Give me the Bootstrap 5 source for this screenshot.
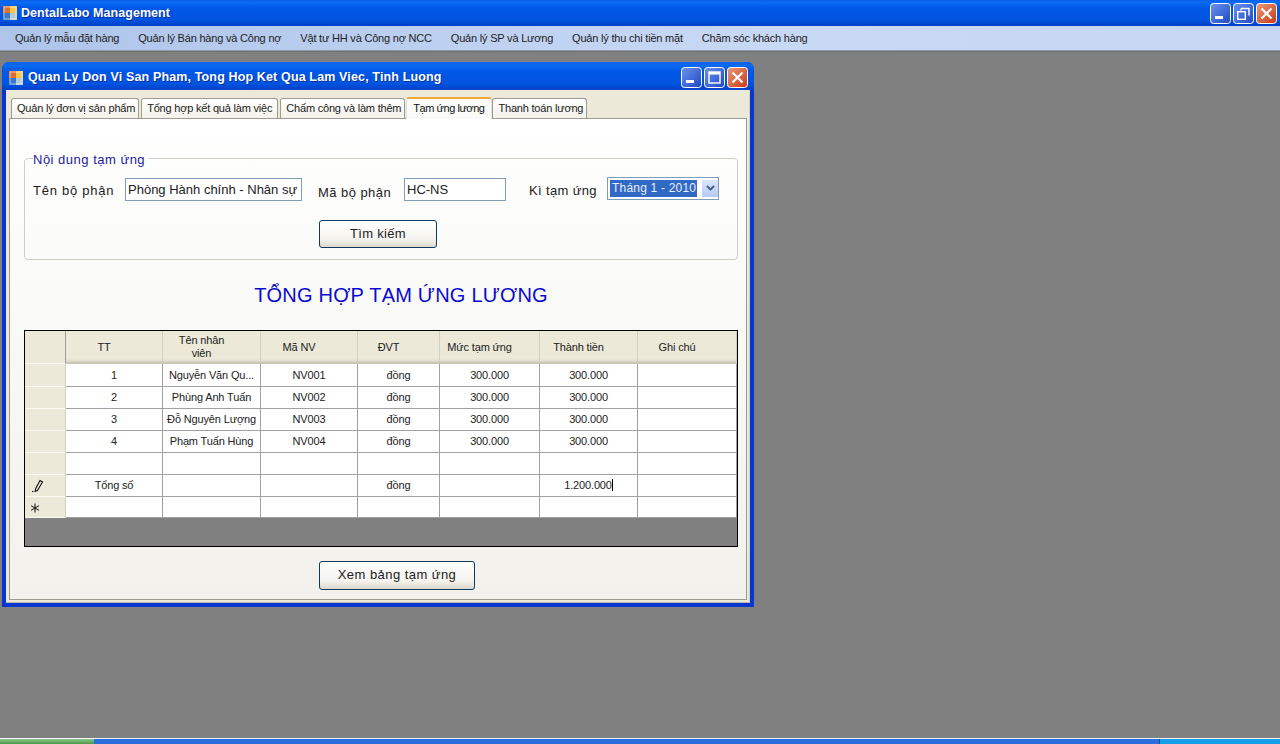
<!DOCTYPE html>
<html lang="vi">
<head>
<meta charset="utf-8">
<title>DentalLabo Management</title>
<link href="https://cdn.jsdelivr.net/npm/bootstrap@5.3.0/dist/css/bootstrap.min.css" rel="stylesheet">
<style>
html,body{margin:0;height:744px;overflow:hidden;background:#808080}
body{font-family:"Liberation Sans",sans-serif;font-size:11px;color:#111}
.app-shell{width:1280px;height:744px}
.flex-none{flex:none}
.xp-title{height:26px;flex:none;background:linear-gradient(#0a62ea 0,#0a6af2 10%,#0058e6 30%,#0054e0 75%,#0040c8 100%);padding:0 3px 0 3px}
.xp-title-text{color:#fff;font-weight:700;font-size:12.5px;text-shadow:1px 1px 0 #0a2f9a;letter-spacing:.05px}
.xp-btns{gap:2px}
.xp-btn{width:21px;height:21px;display:block;flex:none}
.menu-strip{height:25px;flex:none;background:linear-gradient(90deg,#aec4ea,#c8d9f5 60%,#c6d7f3);border-bottom:1px solid #8f9cb0;padding-left:15px;gap:19px;font-size:11px;letter-spacing:-.2px;color:#222}
.mdi-area{background:#808080;border-top:1px solid #6f7068;padding:10px 0 0 2px;min-height:0}
.child-win{width:752px;height:545px;background:#0a36d0;border-radius:7px 7px 0 0;padding:0 4px 4px;flex:none}
.child-title{height:28px;flex:none;margin:0 -4px;padding:3px 6px 0 7px;border-radius:7px 7px 0 0;background:linear-gradient(#0a62ea 0,#0a6af2 12%,#0058e6 32%,#0054e0 78%,#0040c8 100%)}
.child-title .xp-title-text{font-size:12.5px;letter-spacing:.14px;margin-left:1px}
.child-body{background:#ece9d8;min-height:0;padding:8px 2px 2px 3px;border-right:1px solid #cfd0c8;border-bottom:1px solid #b8b8b0}
.tab-strip.nav-tabs{border:0;padding-left:2px;height:20px;flex:none;flex-wrap:nowrap;gap:2px;--bs-nav-tabs-border-width:0}
.tab-strip .nav-link{font-size:11px;letter-spacing:-.2px;color:#222;padding:0 3px 0 5px;height:20px;margin-top:0;line-height:19px;border:1px solid #9c9c90;border-bottom:0;border-radius:3px 3px 0 0;background:linear-gradient(#fff,#f4f2e9);white-space:nowrap}
.tab-strip .nav-item:nth-child(2) .nav-link{padding-right:5px}
.tab-strip .nav-link.active{height:22px;margin:-1px -2px 0 -1px;line-height:19px;letter-spacing:-.45px;background:#fbfbf9;border-top:2px solid #f2a93a;color:#111;position:relative;z-index:2;padding:0 7px 0 6px}
.tab-page{border:1px solid #9c9c90;background:linear-gradient(#fff,#f9f9f6 40%,#f3f1ec);min-height:0;padding:27px 8px 0 14px}
.group-box{border:1px solid #cfcfc4;border-radius:4px;height:114px;padding:0 8px;margin:0;min-width:0;flex:none}
.group-legend{float:none;width:auto;margin:0;padding:4px 3px 0 0;font-size:13px;line-height:20px;color:#1c1c9e;letter-spacing:.5px}
.field-row{margin-top:8px}
.lbl{font-size:13px;color:#222;letter-spacing:.45px;white-space:nowrap;flex:none}
.label-name{width:92px;margin-top:3px;letter-spacing:.75px}
.label-code{width:86px;margin:5px 0 0 16px}
.label-term{width:78px;margin:3px 0 0 23px;letter-spacing:.35px}
.win-input.form-control{font-size:13px;height:23px;border-radius:0;border:1px solid #7f9db9;padding:0 2px;color:#222;background:#fff;box-shadow:none;flex:none}
.input-name{width:177px}
.input-code{width:102px}
.combo{width:112px;height:23px;margin-top:-1px;border:1px solid #7f9db9;background:#fff;padding:2px 1px 2px 2px;flex:none}
.combo-text{background:#316ac5;color:#e8eefc;font-size:12px;letter-spacing:.2px;line-height:16px;width:87px;padding-left:2px;white-space:nowrap;flex:none;align-self:flex-start;height:17px}
.combo-arrow{width:16px;background:linear-gradient(#dbe6fb,#b5c9f2);margin-left:5px;flex:none}
.win-btn.btn{font-size:13px;letter-spacing:.3px;color:#222;border:1px solid #0f3a5f;border-radius:3px;background:linear-gradient(#fff,#f4f3ee 70%,#dcd8cc);padding:0;line-height:1}
.btn-row{padding-left:286px;margin-top:17px}
.btn-search{width:118px;height:28px}
.report-head{font-size:20px;line-height:24px;color:#0a0ad2;letter-spacing:.22px;margin:23px 0;padding-left:40px}
.grid-box{border:1px solid #000;height:217px;background:#808080;width:714px;overflow:hidden;flex:none}
.data-grid.table{width:712px;table-layout:fixed;margin:0;--bs-table-bg:transparent;border-collapse:separate;border-spacing:0;font-size:11px;letter-spacing:-.15px;color:#222}
.data-grid col:nth-child(1){width:41px}
.data-grid col:nth-child(2){width:97px}
.data-grid col:nth-child(3){width:98px}
.data-grid col:nth-child(4){width:97px}
.data-grid col:nth-child(5){width:82px}
.data-grid col:nth-child(6){width:100px}
.data-grid col:nth-child(7){width:98px}
.data-grid col:nth-child(8){width:99px}
.data-grid th,.data-grid td{height:22px;padding:0 2px;border:0;border-right:1px solid #a0a0a0;border-bottom:1px solid #a0a0a0;background:#fff;text-align:center;vertical-align:middle;font-weight:400;line-height:13px;white-space:nowrap;overflow:hidden;box-shadow:none}
.data-grid thead th{height:33px;background:linear-gradient(#ece9d8 90%,#d8d5c4);border-right:1px solid #d2cfbe;border-bottom:2px solid #c9c6b6;padding:1px 22px 0 2px;white-space:normal}
.data-grid tbody tr:first-child td{height:23px;padding-top:1px}
.data-grid tbody tr:last-child td{height:21px}
.data-grid .corner,.data-grid .row-head{background:#ece9d8;border-right:1px solid #d2cfbe;border-bottom:1px solid #fbfaf4;padding:0 0 0 6px;text-align:left}
.data-grid thead .corner{padding:0;border-right:1px solid #a0a0a0}
.data-grid .star-head{padding-left:5px}
.caret-mark{border-right:1px solid #000}
.save-row{padding-left:295px;margin-top:14px}
.btn-view{width:156px;height:29px}
.win-btn.btn-view{letter-spacing:.45px;padding-bottom:2px}
.task-strip{height:6px;flex:none;background:#2a6ee0;border-top:1px solid #f4f6fb}
.task-start{width:94px;background:linear-gradient(#8cc68c,#4a9a4a)}
.task-tray{width:121px;background:#15a0ea;margin-left:auto;border-left:1px solid #0c4a9a}
</style>
</head>
<body>
<div class="app-shell d-flex flex-column">

  <div class="xp-title d-flex align-items-center">
    <svg width="14" height="14" viewBox="0 0 14 14" class="flex-none me-1"><rect x="0" y="0" width="7" height="7" fill="#e07030"/><rect x="7" y="0" width="7" height="7" fill="#f2c84a"/><rect x="0" y="7" width="7" height="7" fill="#3a78c8"/><rect x="7" y="7" width="7" height="7" fill="#b8c8d8"/><rect x="1" y="1" width="12" height="12" fill="none" stroke="#fff" stroke-opacity=".55"/></svg>
    <span class="xp-title-text">DentalLabo Management</span>
    <div class="xp-btns d-flex ms-auto">
      <svg class="xp-btn" viewBox="0 0 21 21"><defs><linearGradient id="bl" x1="0" y1="0" x2="1" y2="1"><stop offset="0" stop-color="#6c93ee"/><stop offset="1" stop-color="#1f48c4"/></linearGradient><linearGradient id="rd" x1="0" y1="0" x2="1" y2="1"><stop offset="0" stop-color="#ec9a78"/><stop offset="1" stop-color="#c83a14"/></linearGradient></defs><rect x=".5" y=".5" width="20" height="20" rx="3" fill="url(#bl)" stroke="#fff"/><rect x="5" y="13" width="8" height="3" fill="#fff"/></svg>
      <svg class="xp-btn" viewBox="0 0 21 21"><rect x=".5" y=".5" width="20" height="20" rx="3" fill="url(#bl)" stroke="#fff"/><path d="M8 5.5h8v7M8 5.5v2" fill="none" stroke="#fff" stroke-width="1.4"/><rect x="4.7" y="8.7" width="7.6" height="7.6" fill="none" stroke="#fff" stroke-width="1.4"/></svg>
      <svg class="xp-btn" viewBox="0 0 21 21"><rect x=".5" y=".5" width="20" height="20" rx="3" fill="url(#rd)" stroke="#fff"/><path d="M5.5 5.5l10 10M15.5 5.5l-10 10" stroke="#fff" stroke-width="2.2"/></svg>
    </div>
  </div>

  <nav class="menu-strip nav align-items-center flex-nowrap">
    <span>Quản lý mẫu đặt hàng</span>
    <span>Quản lý Bán hàng và Công nợ</span>
    <span>Vật tư HH và Công nợ NCC</span>
    <span>Quản lý SP và Lương</span>
    <span>Quản lý thu chi tiền mặt</span>
    <span>Chăm sóc khách hàng</span>
  </nav>

  <div class="mdi-area flex-grow-1 d-flex align-items-start">
    <div class="child-win d-flex flex-column">
      <div class="child-title d-flex align-items-center">
        <svg width="14" height="14" viewBox="0 0 14 14" class="me-1"><rect x="0" y="0" width="7" height="7" fill="#e07030"/><rect x="7" y="0" width="7" height="7" fill="#f2c84a"/><rect x="0" y="7" width="7" height="7" fill="#3a78c8"/><rect x="7" y="7" width="7" height="7" fill="#b8c8d8"/><rect x="1" y="1" width="12" height="12" fill="none" stroke="#fff" stroke-opacity=".55"/></svg>
        <span class="xp-title-text">Quan Ly Don Vi San Pham, Tong Hop Ket Qua Lam Viec, Tinh Luong</span>
        <div class="xp-btns d-flex ms-auto">
          <svg class="xp-btn" viewBox="0 0 21 21"><rect x=".5" y=".5" width="20" height="20" rx="3" fill="url(#bl)" stroke="#fff"/><rect x="5" y="13" width="8" height="3" fill="#fff"/></svg>
          <svg class="xp-btn" viewBox="0 0 21 21"><rect x=".5" y=".5" width="20" height="20" rx="3" fill="url(#bl)" stroke="#fff"/><rect x="5" y="5" width="11" height="11" fill="none" stroke="#fff" stroke-width="1.4"/><rect x="5" y="5" width="11" height="2.5" fill="#fff"/></svg>
          <svg class="xp-btn" viewBox="0 0 21 21"><rect x=".5" y=".5" width="20" height="20" rx="3" fill="url(#rd)" stroke="#fff"/><path d="M5.5 5.5l10 10M15.5 5.5l-10 10" stroke="#fff" stroke-width="2.2"/></svg>
        </div>
      </div>

      <div class="child-body flex-grow-1 d-flex flex-column">
        <ul class="tab-strip nav nav-tabs">
          <li class="nav-item"><span class="nav-link">Quản lý đơn vị sản phẩm</span></li>
          <li class="nav-item"><span class="nav-link">Tổng hợp kết quả làm việc</span></li>
          <li class="nav-item"><span class="nav-link">Chấm công và làm thêm</span></li>
          <li class="nav-item"><span class="nav-link active">Tạm ứng lương</span></li>
          <li class="nav-item"><span class="nav-link">Thanh toán lương</span></li>
        </ul>
        <div class="tab-page flex-grow-1 d-flex flex-column">
          <fieldset class="group-box">
            <legend class="group-legend">Nội dung tạm ứng</legend>
            <div class="d-flex align-items-start field-row">
              <span class="lbl label-name">Tên bộ phận</span>
              <input class="win-input form-control input-name" value="Phòng Hành chính - Nhân sự">
              <span class="lbl label-code">Mã bộ phận</span>
              <input class="win-input form-control input-code" value="HC-NS">
              <span class="lbl label-term">Kì tạm ứng</span>
              <div class="combo d-flex">
                <div class="combo-text">Tháng 1 - 2010</div>
                <div class="combo-arrow d-flex align-items-center justify-content-center"><svg width="9" height="7" viewBox="0 0 9 7"><path d="M1 1l3.5 3.5L8 1" fill="none" stroke="#4d6185" stroke-width="2"/></svg></div>
              </div>
            </div>
            <div class="d-flex btn-row"><button type="button" class="win-btn btn btn-search">Tìm kiếm</button></div>
          </fieldset>

          <div class="report-head text-center">TỔNG HỢP TẠM ỨNG LƯƠNG</div>

          <div class="grid-box">
            <table class="data-grid table">
              <colgroup><col><col><col><col><col><col><col><col></colgroup>
              <thead><tr><th class="corner"></th><th>TT</th><th>Tên nhân<br>viên</th><th>Mã NV</th><th>ĐVT</th><th>Mức tạm ứng</th><th>Thành tiền</th><th>Ghi chú</th></tr></thead>
              <tbody>
                <tr><td class="row-head"></td><td>1</td><td>Nguyễn Văn Qu...</td><td>NV001</td><td>đồng</td><td>300.000</td><td>300.000</td><td></td></tr>
                <tr><td class="row-head"></td><td>2</td><td>Phùng Anh Tuấn</td><td>NV002</td><td>đồng</td><td>300.000</td><td>300.000</td><td></td></tr>
                <tr><td class="row-head"></td><td>3</td><td>Đỗ Nguyên Lượng</td><td>NV003</td><td>đồng</td><td>300.000</td><td>300.000</td><td></td></tr>
                <tr><td class="row-head"></td><td>4</td><td>Phạm Tuấn Hùng</td><td>NV004</td><td>đồng</td><td>300.000</td><td>300.000</td><td></td></tr>
                <tr><td class="row-head"></td><td></td><td></td><td></td><td></td><td></td><td></td><td></td></tr>
                <tr><td class="row-head"><svg width="14" height="14" viewBox="0 0 14 14"><path d="M9 1.5l2.5 1.5-5 8.5-2.2.8.2-2.4z" fill="none" stroke="#111" stroke-width="1.1"/><path d="M1 12.5h1M2.6 12.5h.8" stroke="#111"/></svg></td><td>Tổng số</td><td></td><td></td><td>đồng</td><td></td><td><span class="caret-mark">1.200.000</span></td><td></td></tr>
                <tr><td class="row-head star-head"><svg width="10" height="10" viewBox="0 0 10 10"><path d="M5 .5v9M1 2.7l8 4.6M9 2.7L1 7.3" stroke="#111" stroke-width="1"/></svg></td><td></td><td></td><td></td><td></td><td></td><td></td><td></td></tr>
              </tbody>
            </table>
          </div>
          <div class="d-flex save-row"><button type="button" class="win-btn btn btn-view">Xem bảng tạm ứng</button></div>
        </div>
      </div>
    </div>
  </div>

  <div class="task-strip d-flex">
    <div class="task-start"></div>
    <div class="task-tray"></div>
  </div>
</div>
<script src="https://cdn.jsdelivr.net/npm/bootstrap@5.3.0/dist/js/bootstrap.bundle.min.js"></script>
</body>
</html>
